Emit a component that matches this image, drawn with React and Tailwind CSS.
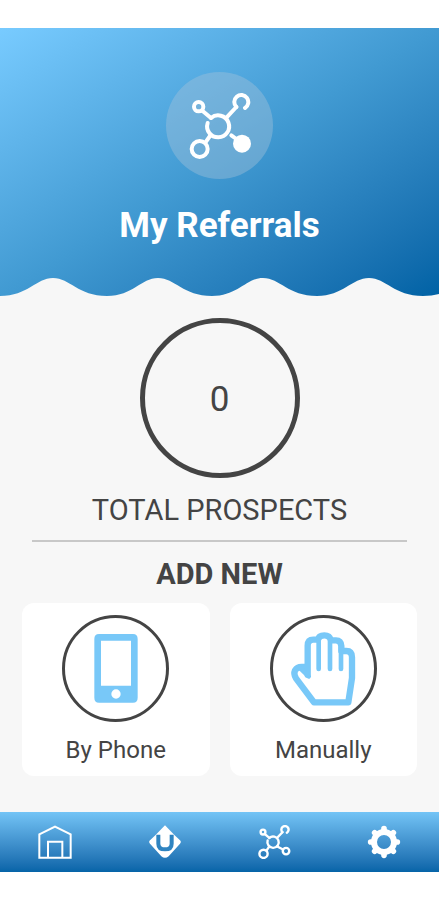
import React from 'react';

// Network / molecule icon, used in the header and in the bottom bar
const NetworkIcon = ({ className, stroke = 12, solid = false }) => (
    <svg viewBox="110 95 198 198" className={className} fill="none" stroke="currentColor" strokeWidth={stroke} strokeLinecap="round">
        <circle cx="145" cy="136" r="14" />
        <circle cx="148" cy="263" r="24" />
        <path d="M258 137A21 21 0 1 1 284 140" />
        <path d="M172 185A33 33 0 1 0 182 170" />
        <path d="M156 148L182 170M258 137L229 168M165 244L181 221" />
        {solid ? (
            <>
                <path d="M243 222L258 233" />
                <circle cx="275" cy="247" r="27" fill="currentColor" stroke="none" />
            </>
        ) : (
            <>
                <path d="M228 220L262 238" />
                <circle cx="279" cy="247" r="19" />
            </>
        )}
    </svg>
);

const HomeIcon = () => (
    <svg viewBox="0 0 102 102" className="h-[34px] w-[34px]" fill="none" stroke="currentColor" strokeWidth="6">
        <path d="M4 98V28L51 5L98 28V98Z" />
        <path d="M30 98V50H73V98" />
    </svg>
);

const UploadIcon = () => (
    <svg viewBox="0 0 102 102" className="h-[34px] w-[34px]">
        <path d="M51 1L80 31L96 46Q101 51 96 56L62 94Q51 103 40 94L6 56Q1 51 6 46L22 31Z" fill="currentColor" />
        <path d="M31 29V56Q31 73 51 73Q71 73 71 56V29" fill="none" stroke="#2f84c1" strokeWidth="12" />
    </svg>
);

const GearIcon = () => (
    <svg viewBox="0 0 102 102" className="h-[34px] w-[34px]" fill="none" stroke="currentColor">
        <circle cx="51" cy="51" r="30" strokeWidth="18" />
        <g strokeWidth="17" strokeLinecap="round">
            <path d="M51 15V11M51 87V91M15 51H11M87 51H91" />
            <path d="M26 26L23 23M76 26L79 23M26 76L23 79M76 76L79 79" />
        </g>
    </svg>
);

const PhoneIcon = () => (
    <svg viewBox="0 0 132 207" className="h-[69px] w-[44px]">
        <path
            fill="#78c8f8"
            fillRule="evenodd"
            d="M15 0H117Q131 0 131 15V191Q131 206 117 206H15Q1 206 1 191V15Q1 0 15 0ZM21 20V155H111V20ZM66 166A14 14 0 1 0 66 194A14 14 0 1 0 66 166Z"
        />
    </svg>
);

const HandIcon = () => (
    <svg viewBox="213 121 204 228" className="h-[76px] w-[68px]" fill="none" stroke="#78c8f8" strokeLinecap="round" strokeLinejoin="round">
        <path
            strokeWidth="19"
            d="M269 252V165Q269 147 286 147H300Q302 134 319 134Q335 134 339 149H354Q369 149 370 166V181H385Q402 181 402 200V262L391 335H288L234 263Q226 250 231 239Q238 228 253 229H269"
        />
        <path strokeWidth="14" d="M302 150V235M336 150V235M369 165V235M248 234L272 257" />
    </svg>
);

const actions = [
    { label: 'By Phone', icon: <PhoneIcon /> },
    { label: 'Manually', icon: <HandIcon /> },
];

const navItems = [
    { label: 'Home', icon: <HomeIcon /> },
    { label: 'Share', icon: <UploadIcon /> },
    { label: 'Referrals', icon: <NetworkIcon className="h-[34px] w-[34px]" stroke={14} /> },
    { label: 'Settings', icon: <GearIcon /> },
];

const App = () => {
    const total = 0;

    return (
        <div className="min-h-screen bg-white py-7 font-['Roboto',sans-serif] text-[#444444]">
            <div className="bg-[#f7f7f7]">
                {/* Header */}
                <header className="flex flex-col items-center bg-linear-to-br from-[#78cbff] via-[#419ad2] to-[#0062a5] pt-11 text-white">
                    <div className="flex h-[107px] w-[107px] items-center justify-center rounded-full bg-[#a7c4d9]/40">
                        <NetworkIcon className="h-[66px] w-[66px]" solid />
                    </div>
                    <h1 className="mt-[27px] text-[35px] leading-10 font-bold">My Referrals</h1>
                    <svg viewBox="0 0 439 18" preserveAspectRatio="none" className="mt-8 h-[18px] w-full text-[#f7f7f7]">
                        <path
                            fill="currentColor"
                            d="M0 18C28 18 36 0 53 0C70 0 78 18 107 18C133 18 141 0 158 0C175 0 183 18 212 18C238 18 246 0 263 0C280 0 288 18 317 18C343 18 352 0 369 0C386 0 394 18 423 18Q432 18 439 16V18Z"
                        />
                    </svg>
                </header>

                <main className="pt-[22px] pb-9">
                    {/* Total */}
                    <section className="flex flex-col items-center">
                        <div className="flex h-40 w-40 items-center justify-center rounded-full border-5 border-[#444444] pt-1 text-[35px]">
                            {total}
                        </div>
                        <p className="mt-3 text-[29px] leading-10">TOTAL PROSPECTS</p>
                    </section>

                    <hr className="mx-8 mt-[10px] border-t-2 border-[#c8c8c8]" />

                    {/* Add new */}
                    <section>
                        <h2 className="mt-4 text-center text-[29px] leading-8 font-bold">ADD NEW</h2>
                        <div className="mt-[13px] grid grid-cols-2 gap-5 px-[22px]">
                            {actions.map((action) => (
                                <button key={action.label} type="button" className="flex flex-col items-center rounded-xl bg-white pt-3 pb-[10px]">
                                    <span className="flex h-[107px] w-[107px] items-center justify-center rounded-full border-3 border-[#444444]">
                                        {action.icon}
                                    </span>
                                    <span className="mt-3 text-[24px] leading-8">{action.label}</span>
                                </button>
                            ))}
                        </div>
                    </section>
                </main>

                {/* Bottom bar */}
                <nav className="grid h-[60px] grid-cols-4 bg-linear-to-b from-[#73c4f6] to-[#0564a8] text-white">
                    {navItems.map((item) => (
                        <a key={item.label} href="#" aria-label={item.label} className="flex items-center justify-center">
                            {item.icon}
                        </a>
                    ))}
                </nav>
            </div>
        </div>
    );
};

export default App;
